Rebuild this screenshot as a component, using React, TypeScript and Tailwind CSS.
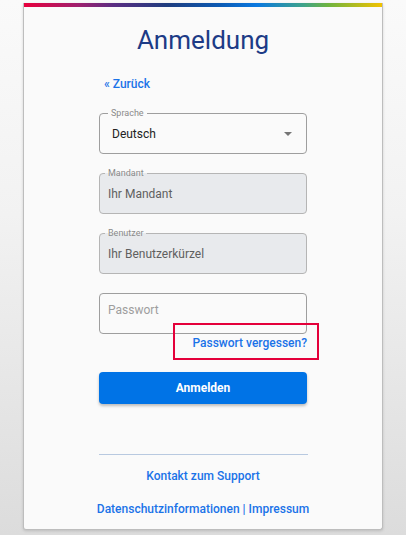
import React from "react";

function Field({ label, value, disabled, placeholder, select }: { label?: string; value: string; disabled?: boolean; placeholder?: boolean; select?: boolean }) {
  const labelBg = disabled
    ? "bg-[linear-gradient(to_bottom,#fafafa_50%,#e8eaed_50%)]"
    : "bg-[#fafafa]";
  return (
    <div
      className={
        "relative h-[41px] rounded-[4px] border flex items-center " +
        (disabled ? "bg-[#e8eaed] border-[#b5b5b5]" : "bg-[#fafafa] border-[#9e9e9e]")
      }
    >
      {label && (
        <span
          className={
            "absolute top-[-7px] text-[9px] leading-[12px] text-[#8a8a8a] px-[3px] " +
            (select ? "left-[8px] " : "left-[5px] ") +
            labelBg
          }
        >
          {label}
        </span>
      )}
      <span
        className={
          "text-[12px] leading-[16px] " +
          (select ? "pl-[12px] text-[#222]" : placeholder ? "pl-[8px] text-[#9e9e9e] -mt-[8px]" : "pl-[8px] text-[#5f5f5f]")
        }
      >
        {value}
      </span>
      {select && (
        <svg className="absolute right-[14px] top-[18px]" width="8" height="4" viewBox="0 0 8 4">
          <path d="M0 0 L8 0 L4 4 Z" fill="#757575" />
        </svg>
      )}
    </div>
  );
}

export default function App() {
  return (
    <div
      className="min-h-[535px] w-full bg-[linear-gradient(to_bottom,#fafafa_0%,#f2f2f2_40%,#dcdcdc_100%)] pt-[3px]"
      style={{ fontFamily: "Roboto, 'Noto Sans', Arial, sans-serif" }}
    >
      <div className="mx-auto w-[360px] h-[527px] bg-[#fafafa] border-x border-b border-[#bdbdbd] rounded-b-[3px] shadow-[0_1px_3px_rgba(0,0,0,0.15)] flex flex-col">
        <div className="h-[4px] w-full bg-[linear-gradient(to_right,#e8003d_0%,#a0206e_15%,#5a2d82_25%,#1f3d7f_40%,#0b5bb5_55%,#0a78e0_65%,#3ea38a_78%,#6fb43f_85%,#f2c200_100%)]" />
        <h1 className="mt-[16px] text-center text-[26px] leading-[34px] text-[#1d3b86] font-normal">
          Anmeldung
        </h1>
        <div className="w-[208px] mx-auto flex flex-col">
          <a className="mt-[19px] pl-[5px] text-[12px] leading-[16px] font-medium text-[#1a73e8]">« Zurück</a>
          <div className="mt-[21px] flex flex-col gap-[19px]">
            <Field label="Sprache" value="Deutsch" select />
            <Field label="Mandant" value="Ihr Mandant" disabled />
            <Field label="Benutzer" value="Ihr Benutzerkürzel" disabled />
            <Field value="Passwort" placeholder />
          </div>
          <div className="mt-[1px] flex justify-end">
            <a className="relative text-[12px] leading-[16px] font-medium text-[#1a73e8]">
              Passwort vergessen?
              <span className="absolute left-[-19px] right-[-12px] top-[-12px] bottom-[-9px] border-2 border-[#e4003a]" />
            </a>
          </div>
          <button className="mt-[21px] h-[32px] w-full rounded-[4px] bg-[#0073e6] text-white text-[12px] font-bold shadow-[0_2px_3px_rgba(0,0,0,0.25)]">
            Anmelden
          </button>
          <div className="mt-[50px] h-px w-[209px] bg-[#b8c9e0]" />
        </div>
        <div className="mt-[13px] text-center text-[12px] leading-[16px] font-medium text-[#1a73e8]">Kontakt zum Support</div>
        <div className="mt-[17px] text-center text-[12px] leading-[16px] font-medium text-[#1a73e8]">
          Datenschutzinformationen | Impressum
        </div>
      </div>
    </div>
  );
}
